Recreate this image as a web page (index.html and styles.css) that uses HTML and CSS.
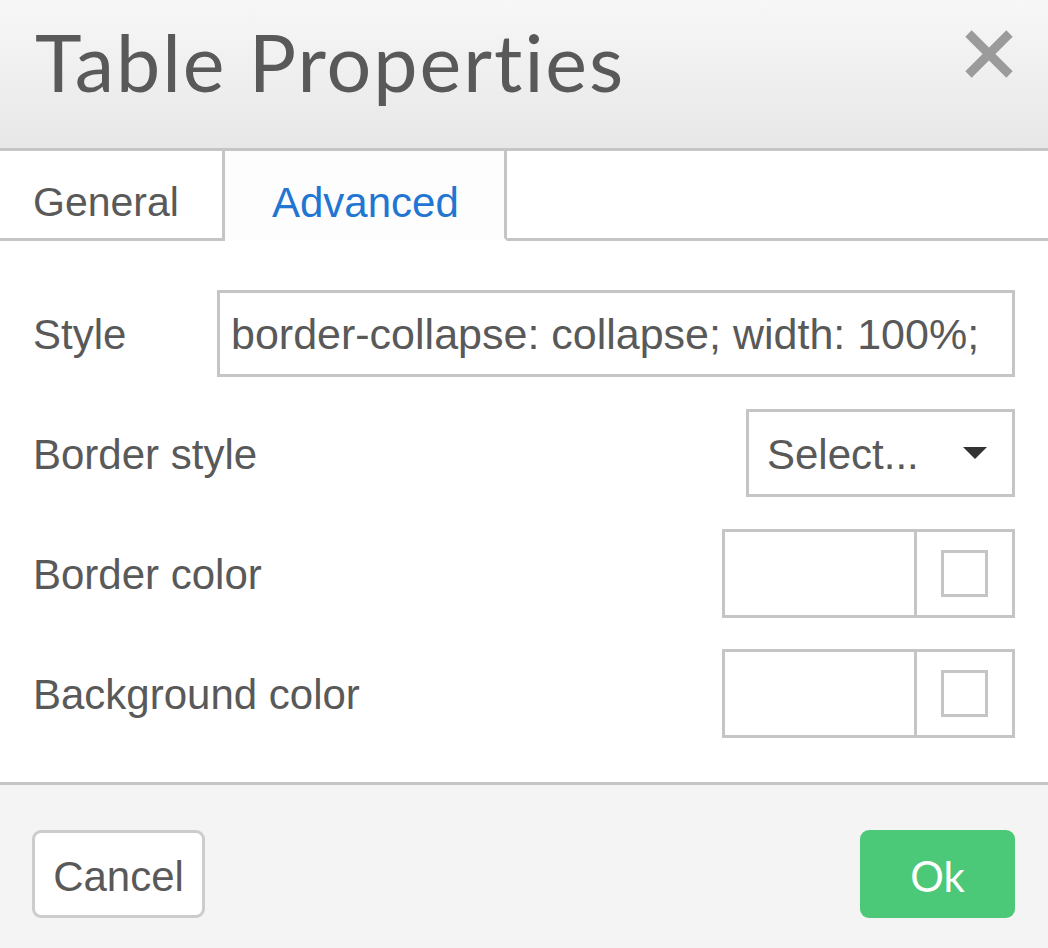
FILE: index.html
```html
<!DOCTYPE html>
<html>
<head>
<meta charset="utf-8">
<link rel="stylesheet" href="styles.css">
</head>
<body>
<div class="dialog">
  <div class="head">
    <div class="title">Table Properties</div>
    <button class="close" aria-label="Close">
      <svg width="48" height="48" viewBox="0 0 48 48"><path d="M3.5 3.5 L44.5 44.5 M44.5 3.5 L3.5 44.5" stroke="#9b9b9b" stroke-width="9" fill="none"/></svg>
    </button>
  </div>
  <div class="tabs">
    <div class="tab tab-general">General</div>
    <div class="tab tab-advanced active">Advanced</div>
  </div>
  <div class="body">
    <div class="row">
      <label class="label label-fixed">Style</label>
      <div class="input">border-collapse: collapse; width: 100%;</div>
    </div>
    <div class="row">
      <label class="label">Border style</label>
      <div class="select"><span>Select...</span><span class="caret"></span></div>
    </div>
    <div class="row">
      <label class="label">Border color</label>
      <div class="picker"><div class="picker-field"></div><div class="picker-btn"><div class="swatch"></div></div></div>
    </div>
    <div class="row">
      <label class="label">Background color</label>
      <div class="picker"><div class="picker-field"></div><div class="picker-btn"><div class="swatch"></div></div></div>
    </div>
  </div>
  <div class="foot">
    <button class="btn btn-cancel">Cancel</button>
    <button class="btn btn-ok">Ok</button>
  </div>
</div>
</body>
</html>
```

FILE: styles.css
```css
html, body {
  margin: 0;
  padding: 0;
  background: #ffffff;
}
.dialog {
  width: 1048px;
  height: 948px;
  display: flex;
  flex-direction: column;
  font-family: "Liberation Sans", Arial, sans-serif;
  font-size: 42px;
  color: #595959;
  overflow: hidden;
}
.head {
  box-sizing: border-box;
  height: 151px;
  border-bottom: 3px solid #c5c5c5;
  background: linear-gradient(#f7f7f7, #e7e7e7);
  display: flex;
  justify-content: space-between;
  align-items: flex-start;
  padding: 0 35px 0 35px;
}
.title {
  font-family: Lato, "Open Sans", sans-serif;
  font-size: 79px;
  line-height: 79px;
  letter-spacing: 2px;
  font-variant-ligatures: none;
  font-feature-settings: "liga" 0, "dlig" 0;
  padding-top: 22px;
  color: #595959;
}
.close {
  margin-top: 30px;
  padding: 0;
  border: 0;
  background: transparent;
  width: 48px;
  height: 48px;
}
.close svg { display: block; }
.tabs {
  box-sizing: border-box;
  height: 90px;
  border-bottom: 3px solid #c5c5c5;
  display: flex;
  align-items: stretch;
}
.tab {
  box-sizing: border-box;
  height: 90px;
  margin-bottom: -3px;
  border-right: 3px solid #c5c5c5;
  border-bottom: 3px solid #c5c5c5;
  padding-top: 28px;
  line-height: 47px;
  color: #595959;
}
.tab-general {
  width: 225px;
  padding-left: 33px;
  font-size: 41px;
}
.tab-advanced {
  width: 282px;
  padding-left: 47px;
}
.tab.active {
  color: #2276d2;
  background: #fdfdfd;
  border-bottom-color: #fdfdfd;
}
.body {
  padding: 48px 33px 45px 33px;
  display: flex;
  flex-direction: column;
  gap: 32px;
  border-bottom: 3px solid #c5c5c5;
}
.row {
  display: flex;
  align-items: center;
  height: 88px;
}
.label {
  flex: 1;
  line-height: 47px;
  padding-top: 3px;
}
.label-fixed {
  flex: 0 0 184px;
}
.input {
  box-sizing: border-box;
  flex: 1;
  height: 87px;
  border: 3px solid #c5c5c5;
  padding: 3px 11px 0 11px;
  display: flex;
  align-items: center;
  white-space: nowrap;
  overflow: hidden;
  font-size: 43px;
}
.select {
  box-sizing: border-box;
  width: 269px;
  height: 88px;
  border: 3px solid #c5c5c5;
  padding: 3px 25px 0 18px;
  display: flex;
  align-items: center;
  justify-content: space-between;
}
.caret {
  width: 0;
  height: 0;
  border-left: 12.5px solid transparent;
  border-right: 12.5px solid transparent;
  border-top: 12px solid #333333;
  margin-top: -4px;
}
.picker {
  box-sizing: border-box;
  width: 293px;
  height: 89px;
  border: 3px solid #c5c5c5;
  display: flex;
}
.picker-field {
  flex: 1;
  border-right: 3px solid #c5c5c5;
}
.picker-btn {
  width: 95px;
  display: flex;
  align-items: center;
  justify-content: center;
}
.swatch {
  box-sizing: border-box;
  width: 47px;
  height: 47px;
  border: 3px solid #c5c5c5;
}
.foot {
  flex: 1;
  background: #f4f4f4;
  display: flex;
  justify-content: space-between;
  align-items: flex-start;
  padding: 45px 33px 0 32px;
}
.btn {
  box-sizing: border-box;
  height: 88px;
  border-radius: 9px;
  font-family: "Liberation Sans", Arial, sans-serif;
  font-size: 42px;
  line-height: 47px;
  padding: 4px 0 0 0;
  cursor: pointer;
}
.btn-cancel {
  width: 173px;
  background: #ffffff;
  border: 3px solid #cccccc;
  color: #595959;
}
.btn-ok {
  width: 155px;
  background: #4bc878;
  border: 0;
  color: #ffffff;
  font-family: Lato, "Open Sans", sans-serif;
}
```
